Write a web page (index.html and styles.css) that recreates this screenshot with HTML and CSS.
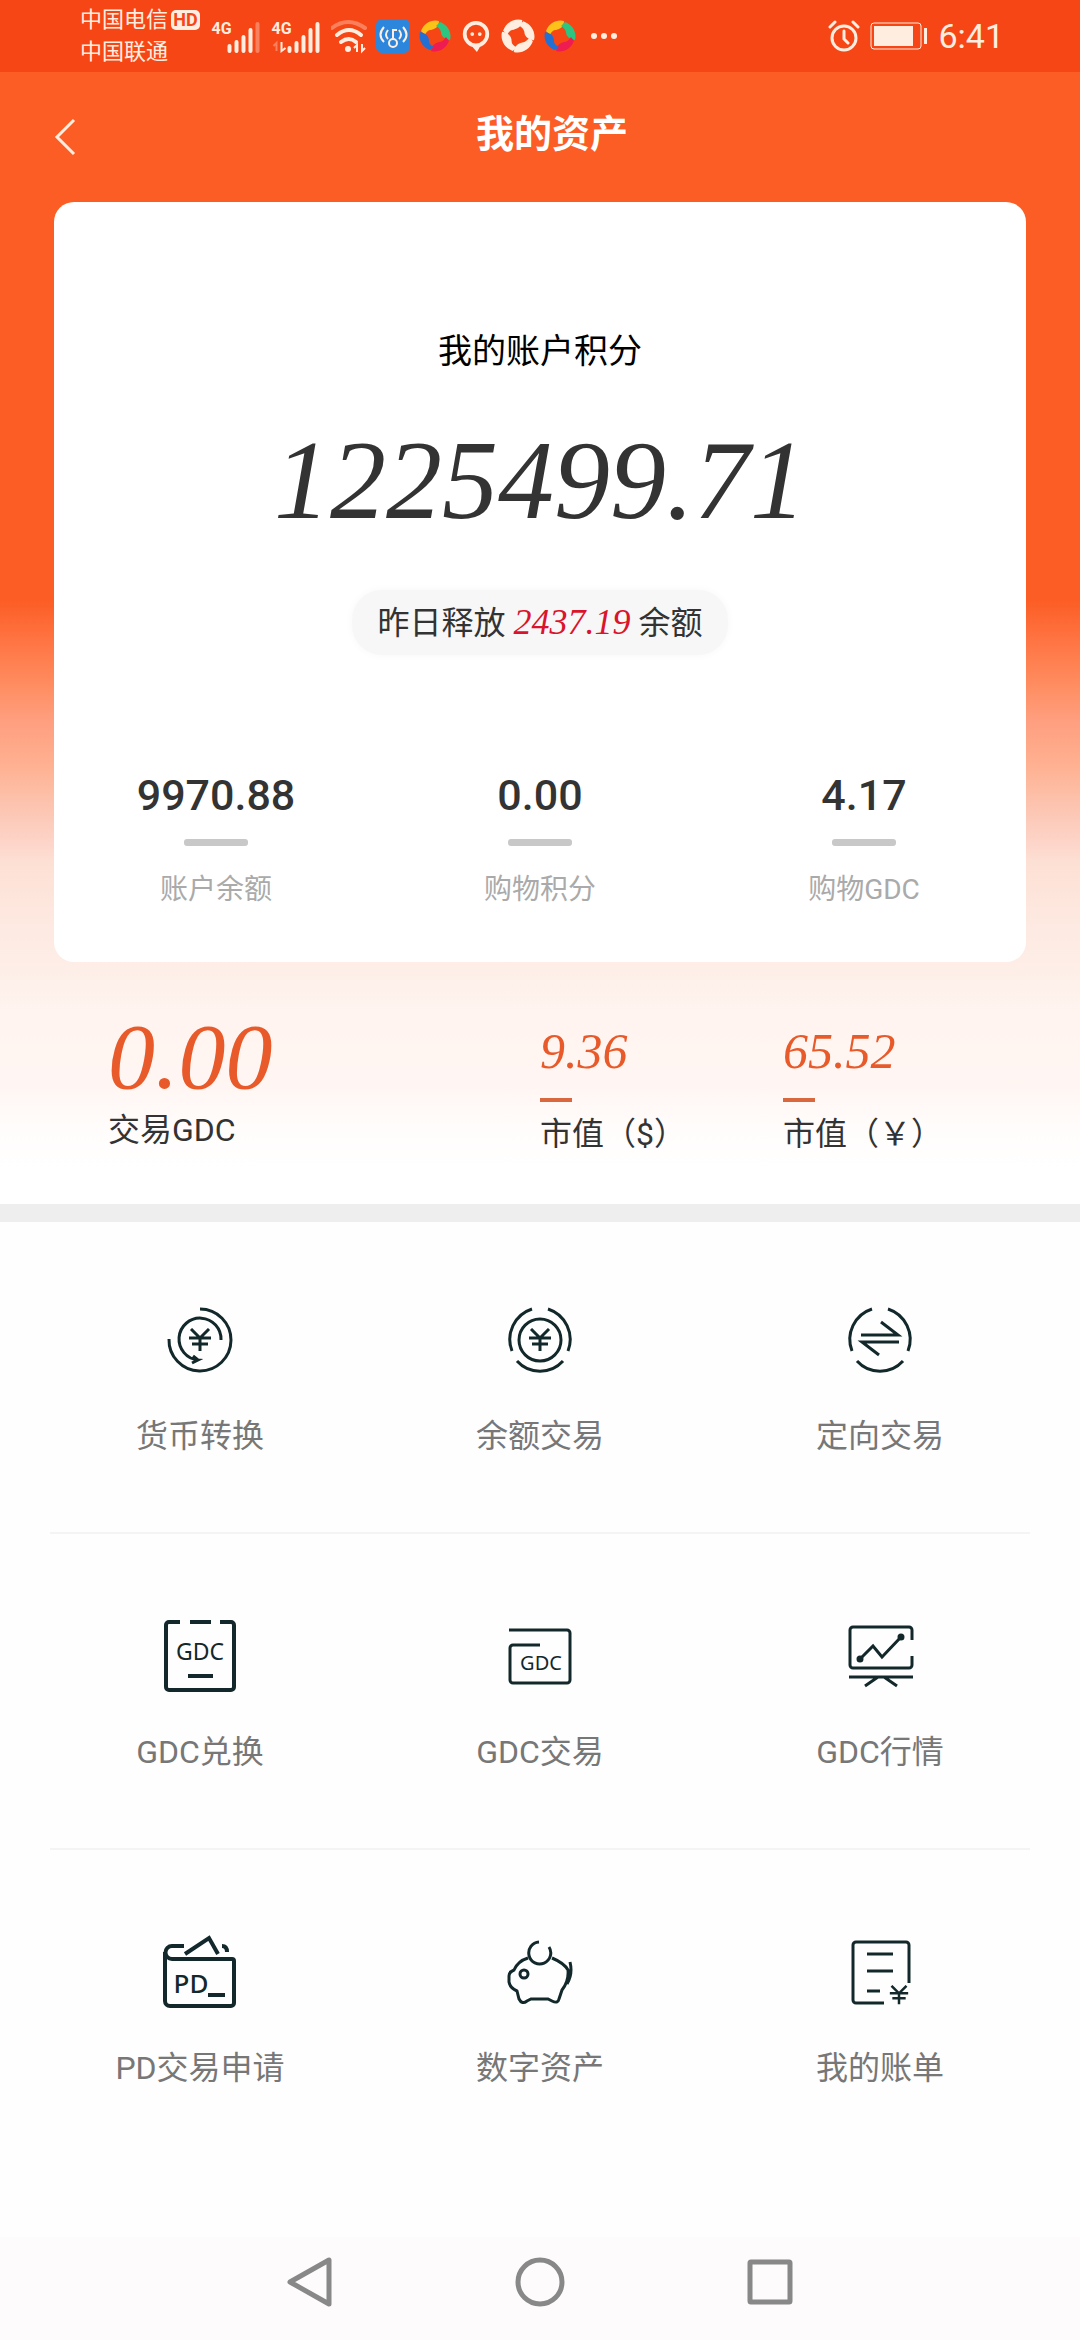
FILE: index.html
```html
<!DOCTYPE html>
<html lang="zh-CN">
<head>
<meta charset="utf-8">
<meta name="viewport" content="width=device-width, initial-scale=1">
<title>我的资产</title>
<link rel="stylesheet" href="styles.css">
</head>
<body>
<svg class="defs" aria-hidden="true">
  <symbol id="yen" viewBox="0 0 24 24"><path d="M3 1l9 9 9-9M1 10h22M4 16h16M12 10v13"/></symbol>
  <symbol id="ring" viewBox="0 0 32 32">
    <path class="c1" d="M2 11C5 3 13-1 20 1c0 6-4 8-8 9-3 0-5 2-6 5z"/>
    <path class="c2" d="M21 2c8 3 12 11 10 18-6-1-9-4-9-8-1-3-2-4-5-6z"/>
    <path class="c3" d="M30 21c-3 8-11 12-18 10 1-6 4-8 8-9 3 0 5-2 7-5z"/>
    <path class="c4" d="M11 30C3 27-1 19 1 12c6 1 9 4 9 9 0 3 2 4 5 6z"/>
  </symbol>
</svg>

<header class="status">
  <div class="carriers">
    <div class="carrier">中国电信<span class="hd">HD</span></div>
    <div class="carrier">中国联通</div>
  </div>
  <div class="indicators">
    <svg class="signal" viewBox="0 0 50 36">
      <text x="0" y="16">4G</text>
      <g class="bars"><path d="M18 28v5M25 24v9M32 19v14M39 12v21"/><path class="faint" d="M46 6v27"/></g>
    </svg>
    <svg class="signal" viewBox="0 0 50 36">
      <text x="0" y="16">4G</text>
      <g class="bars"><path d="M18 30v3M25 25v8M32 19v14M39 12v21M46 6v27"/></g>
      <path class="thin" d="M10 24v9l4-3"/><path class="thin faint" d="M5 33v-8l-3 3"/>
    </svg>
    <svg class="ico36" viewBox="0 0 36 36">
      <g class="wifi"><path class="faint" d="M1 10q16-12 33 0"/><path d="M6 17q12-10 24 0M10 24q8-6 15 0"/></g>
      <circle class="fill" cx="17" cy="31" r="3"/><path class="thin" d="M23 30l3-3v7M34 30l-3 3v-7"/>
    </svg>
    <svg class="ico34" viewBox="0 0 34 34">
      <rect class="blue" width="34" height="34" rx="6"/>
      <g class="thin"><circle cx="17" cy="24" r="4"/><path d="M17 20v-9h4M12 11q-4 5 0 9M8 8q-7 8 0 15M23 11q4 5 0 9M27 8q7 8 0 15"/></g>
    </svg>
    <svg class="ico32 color"><use href="#ring"/></svg>
    <svg class="ico32" viewBox="0 0 32 34">
      <circle class="bubble" cx="16" cy="15" r="12"/><path class="fill" d="M11 27h10l-4 7z"/>
      <circle class="fill" cx="12" cy="15" r="2"/><circle class="fill" cx="20" cy="15" r="2"/>
    </svg>
    <svg class="ico34 white"><use href="#ring"/></svg>
    <svg class="ico32 color"><use href="#ring"/></svg>
    <svg class="ico34" viewBox="0 0 34 34"><g class="fill"><circle cx="9" cy="17" r="3"/><circle cx="19" cy="17" r="3"/><circle cx="29" cy="17" r="3"/></g></svg>
  </div>
  <div class="clock">
    <svg class="ico32" viewBox="0 0 32 32">
      <g class="alarm"><circle cx="16" cy="18" r="12"/><path d="M16 11v8l4 4M2 7l5-5M30 7l-5-5"/></g>
    </svg>
    <svg class="battery" viewBox="0 0 58 28">
      <rect class="outline" x="1" y="1" width="50" height="26" rx="3"/><rect class="fill" x="4" y="4" width="39" height="20"/><rect class="fill" x="54" y="6" width="3" height="16"/>
    </svg>
    <time>6:41</time>
  </div>
</header>

<main>
  <section class="hero">
    <div class="titlebar">
      <button class="back" type="button" aria-label="返回"><svg viewBox="0 0 24 40"><path d="M20 3L3 20l17 17"/></svg></button>
      <h1>我的资产</h1>
    </div>

    <div class="card">
      <p class="card-label">我的账户积分</p>
      <p class="total">1225499.71</p>
      <p class="release">昨日释放 <em>2437.19</em> 余额</p>
      <div class="stats">
        <div class="stat"><strong>9970.88</strong><span>账户余额</span></div>
        <div class="stat"><strong>0.00</strong><span>购物积分</span></div>
        <div class="stat"><strong>4.17</strong><span>购物GDC</span></div>
      </div>
    </div>

    <div class="market">
      <div class="holding"><em>0.00</em><span>交易GDC</span></div>
      <div class="value"><em>9.36</em><span>市值（$）</span></div>
      <div class="value"><em>65.52</em><span>市值（￥）</span></div>
    </div>
  </section>

  <nav class="menu">
    <div class="menu-row">
      <a class="item" href="#convert">
        <svg viewBox="0 0 80 80"><path d="M40 9A31 31 0 1 1 9 39M61 40A21 21 0 1 0 38 60l-6 3M38 60l-5-4"/><use href="#yen" x="28" y="28" width="24" height="24"/></svg>
        <span>货币转换</span>
      </a>
      <a class="item" href="#balance">
        <svg viewBox="0 0 80 80"><path d="M32 9A32 32 0 0 0 12 51M48 9A32 32 0 0 1 68 51M17 61A31 31 0 0 0 63 61"/><circle cx="40" cy="40" r="21"/><use href="#yen" x="28" y="28" width="24" height="24"/></svg>
        <span>余额交易</span>
      </a>
      <a class="item" href="#direct">
        <svg viewBox="0 0 80 80"><path d="M32 9A32 32 0 0 0 12 51M48 9A32 32 0 0 1 68 51M17 61A31 31 0 0 0 63 61M41 22l17 13H21M59 42H22l17 13"/></svg>
        <span>定向交易</span>
      </a>
    </div>
    <div class="menu-row">
      <a class="item" href="#gdc-exchange">
        <svg class="bold" viewBox="0 0 80 80"><path d="M20 6H9a3 3 0 0 0-3 3v62a3 3 0 0 0 3 3h62a3 3 0 0 0 3-3V9a3 3 0 0 0-3-3H60M30 6h21M28 60h25"/><text x="40" y="44" font-size="23">GDC</text></svg>
        <span>GDC兑换</span>
      </a>
      <a class="item" href="#gdc-trade">
        <svg viewBox="0 0 80 80"><path d="M9 14h58a3 3 0 0 1 3 3v47a3 3 0 0 1-3 3H13a3 3 0 0 1-3-3V32a3 3 0 0 1 3-3h27"/><text x="41" y="54" font-size="20">GDC</text></svg>
        <span>GDC交易</span>
      </a>
      <a class="item" href="#gdc-quotes">
        <svg viewBox="0 0 80 80"><path d="M72 24V14a3 3 0 0 0-3-3H13a3 3 0 0 0-3 3v35a3 3 0 0 0 3 3h56a3 3 0 0 0 3-3V40M20 43l13-13 9 11 19-20M9 61h64M38 61l-13 9M44 61l13 9"/><circle class="dot" cx="20" cy="43" r="2"/><circle class="dot" cx="61" cy="21" r="2"/></svg>
        <span>GDC行情</span>
      </a>
    </div>
    <div class="menu-row">
      <a class="item" href="#pd-apply">
        <svg class="bold" viewBox="0 0 80 80"><path d="M24 14H12a6 6 0 0 0 0 13h60a2 2 0 0 1 2 2v42a3 3 0 0 1-3 3H10a5 5 0 0 1-5-5V20M25 22L49 6l9 16M62 14q5 0 5 6M48 63h17"/><text class="pd" x="31" y="61" font-size="26">PD</text></svg>
        <span>PD交易申请</span>
      </a>
      <a class="item" href="#digital">
        <svg viewBox="0 0 80 80"><path d="M39 10A11 11 0 1 0 49 15M28 26Q18 29 14 38q-5 2-5 6v6q1 6 8 9l2 8q3 6 8 2l4-2h17l4 2q6 3 7-2l3-9q7-9 6-20Q64 31 52 26M70 30q3 12-3 22"/><circle cx="24" cy="42" r="4"/></svg>
        <span>数字资产</span>
      </a>
      <a class="item" href="#bills">
        <svg viewBox="0 0 80 80"><path d="M69 51V13a3 3 0 0 0-3-3H16a3 3 0 0 0-3 3v55a3 3 0 0 0 3 3h28M27 22h26M27 39h26M27 59h13"/><use href="#yen" x="49" y="53" width="20" height="20"/></svg>
        <span>我的账单</span>
      </a>
    </div>
  </nav>
</main>

<footer class="sysnav">
  <button type="button" aria-label="返回"><svg viewBox="0 0 52 52"><path d="M45 4v44L6 26z"/></svg></button>
  <button type="button" aria-label="主页"><svg viewBox="0 0 52 52"><circle cx="26" cy="26" r="22"/></svg></button>
  <button type="button" aria-label="最近任务"><svg viewBox="0 0 52 52"><rect x="6" y="6" width="40" height="40" rx="1"/></svg></button>
</footer>
</body>
</html>
```
FILE: styles.css
```css
* { box-sizing: border-box; }

body {
  margin: 0;
  min-height: 100vh;
  display: flex;
  flex-direction: column;
  background: #fefefe;
  color: #333;
  font-family: Roboto, "Noto Sans CJK SC", sans-serif;
}

h1, p { margin: 0; font-weight: 400; }
svg { display: block; }
button { padding: 0; border: 0; background: none; }
.defs { position: absolute; width: 0; height: 0; }

/* Status bar */
.status {
  display: flex;
  align-items: center;
  height: 72px;
  padding: 0 76px 0 80px;
  gap: 11px;
  background: #f74616;
  color: #ffeee0;
}
.carriers { width: 120px; }
.carrier {
  display: flex;
  align-items: center;
  justify-content: space-between;
  font-size: 22px;
  line-height: 32px;
}
.hd {
  width: 29px;
  border-radius: 5px;
  background: #ffeee0;
  color: #f74616;
  font-size: 18px;
  font-weight: 700;
  line-height: 20px;
  text-align: center;
}
.indicators { display: flex; align-items: center; gap: 9px; }
.signal { width: 51px; height: 36px; }
.signal text { fill: #ffeee0; font-size: 16px; font-weight: 700; }
.bars { stroke: #ffeee0; stroke-width: 4; stroke-linecap: round; }
.faint { opacity: .35; }
.ico32 { width: 32px; height: 32px; }
.ico34 { width: 34px; height: 34px; }
.ico36 { width: 36px; height: 36px; }
.battery { width: 58px; height: 28px; }
.fill { fill: #ffeee0; }
.blue { fill: #2c86dc; }
.thin { fill: none; stroke: #ffeee0; stroke-width: 2; }
.wifi, .alarm, .bubble { fill: none; stroke: #ffeee0; stroke-width: 4; stroke-linecap: round; }
.alarm { stroke-width: 3; }
.outline { fill: none; stroke: #ffeee0; stroke-width: 1; }
.color { --a: #fdc21a; --b: #2cc680; --c: #ee1c50; --d: #2370d4; }
.white { --a: #ffeee0; --b: #ffeee0; --c: #ffeee0; --d: #ffeee0; }
.c1 { fill: var(--a); }
.c2 { fill: var(--b); }
.c3 { fill: var(--c); }
.c4 { fill: var(--d); }
.clock {
  display: flex;
  align-items: center;
  gap: 10px;
  margin-left: auto;
  font-size: 34px;
}

/* Orange area */
.hero {
  padding: 0 54px 48px;
  border-bottom: 18px solid #eee;
  background: linear-gradient(#fc5d25 0, #fc5d25 528px, #ff7544 570px, #ff8b5e 610px, #fe9f80 650px, #ffb090 692px, #fcc4b0 734px, #fdd6cb 774px, #fde0d4 790px, #fdeae2 856px, #fdeee7 896px, #fff4ef 938px, #fff6f3 1014px, #fffdfc 1060px, #fff 1100px);
}
.titlebar {
  display: grid;
  grid-template-columns: 24px 1fr;
  align-items: center;
  height: 130px;
}
.back svg {
  width: 24px;
  height: 40px;
  fill: none;
  stroke: #ffeee0;
  stroke-width: 3;
}
h1 {
  padding-bottom: 6px;
  color: #fff;
  font-size: 38px;
  font-weight: 700;
  line-height: 60px;
  text-align: center;
}

.card {
  padding: 124px 0 52px;
  border-radius: 20px;
  background: #fff;
  text-align: center;
}
.card-label { color: #000; font-size: 34px; line-height: 50px; }
.total, .release em, .market em { font-family: "Liberation Serif", serif; font-style: italic; }
.total { padding-top: 36px; font-size: 112px; line-height: 136px; }
.release {
  width: max-content;
  margin: 42px auto 0;
  padding: 0 26px;
  border-radius: 30px;
  background: #f7f7f7;
  box-shadow: 0 0 8px #f7f7f7;
  font-size: 32px;
  line-height: 64px;
}
.release em { color: #d9142c; font-size: 36px; }
.stats { display: grid; grid-template-columns: repeat(3, 1fr); padding-top: 110px; }
.stat { display: flex; flex-direction: column; align-items: center; }
.stat strong { font-size: 43px; font-weight: 500; line-height: 60px; }
.stat strong::after {
  content: "";
  display: block;
  width: 64px;
  height: 7px;
  margin: 14px auto 24px;
  border-radius: 3px;
  background: #c8c8c8;
}
.stat span { color: #aaa; font-size: 28px; line-height: 40px; }

.market {
  display: grid;
  grid-template-columns: 16fr 9fr 9fr;
  padding: 42px 0 0 54px;
}
.market em, .market span { display: block; }
.market em { color: #e85a2a; }
.market span { font-size: 32px; line-height: 44px; white-space: nowrap; }
.holding em { font-size: 94px; line-height: 104px; }
.value em { font-size: 50px; line-height: 94px; }
.value span::before {
  content: "";
  display: block;
  width: 32px;
  height: 4px;
  margin-bottom: 10px;
  background: #d9683f;
}

/* Shortcuts */
.menu { padding: 0 50px; }
.menu-row {
  display: grid;
  grid-template-columns: repeat(3, 1fr);
  column-gap: 40px;
  border-bottom: 2px solid #f4f4f4;
}
.menu-row:last-child { border-bottom: 0; }
.item {
  display: flex;
  flex-direction: column;
  align-items: center;
  gap: 32px;
  padding: 82px 0 72px;
  color: #777;
  font-size: 32px;
  line-height: 48px;
  text-decoration: none;
}
.menu-row:first-child .item { padding-top: 78px; }
.item svg {
  width: 80px;
  height: 80px;
  fill: none;
  stroke: #12282b;
  stroke-width: 3;
}
.item .bold { stroke-width: 4; }
.item text {
  fill: #12282b;
  stroke: none;
  font-family: "Noto Sans", sans-serif;
  text-anchor: middle;
}
.item .pd { font-weight: 500; }
.item .dot { fill: #12282b; }

/* System navigation */
.sysnav {
  display: flex;
  justify-content: center;
  gap: 178px;
  margin-top: auto;
  padding: 19px 0 32px;
  background: #fdfbfc;
}
.sysnav svg {
  width: 52px;
  height: 52px;
  fill: none;
  stroke: #888;
  stroke-width: 5;
  stroke-linejoin: round;
}
```
